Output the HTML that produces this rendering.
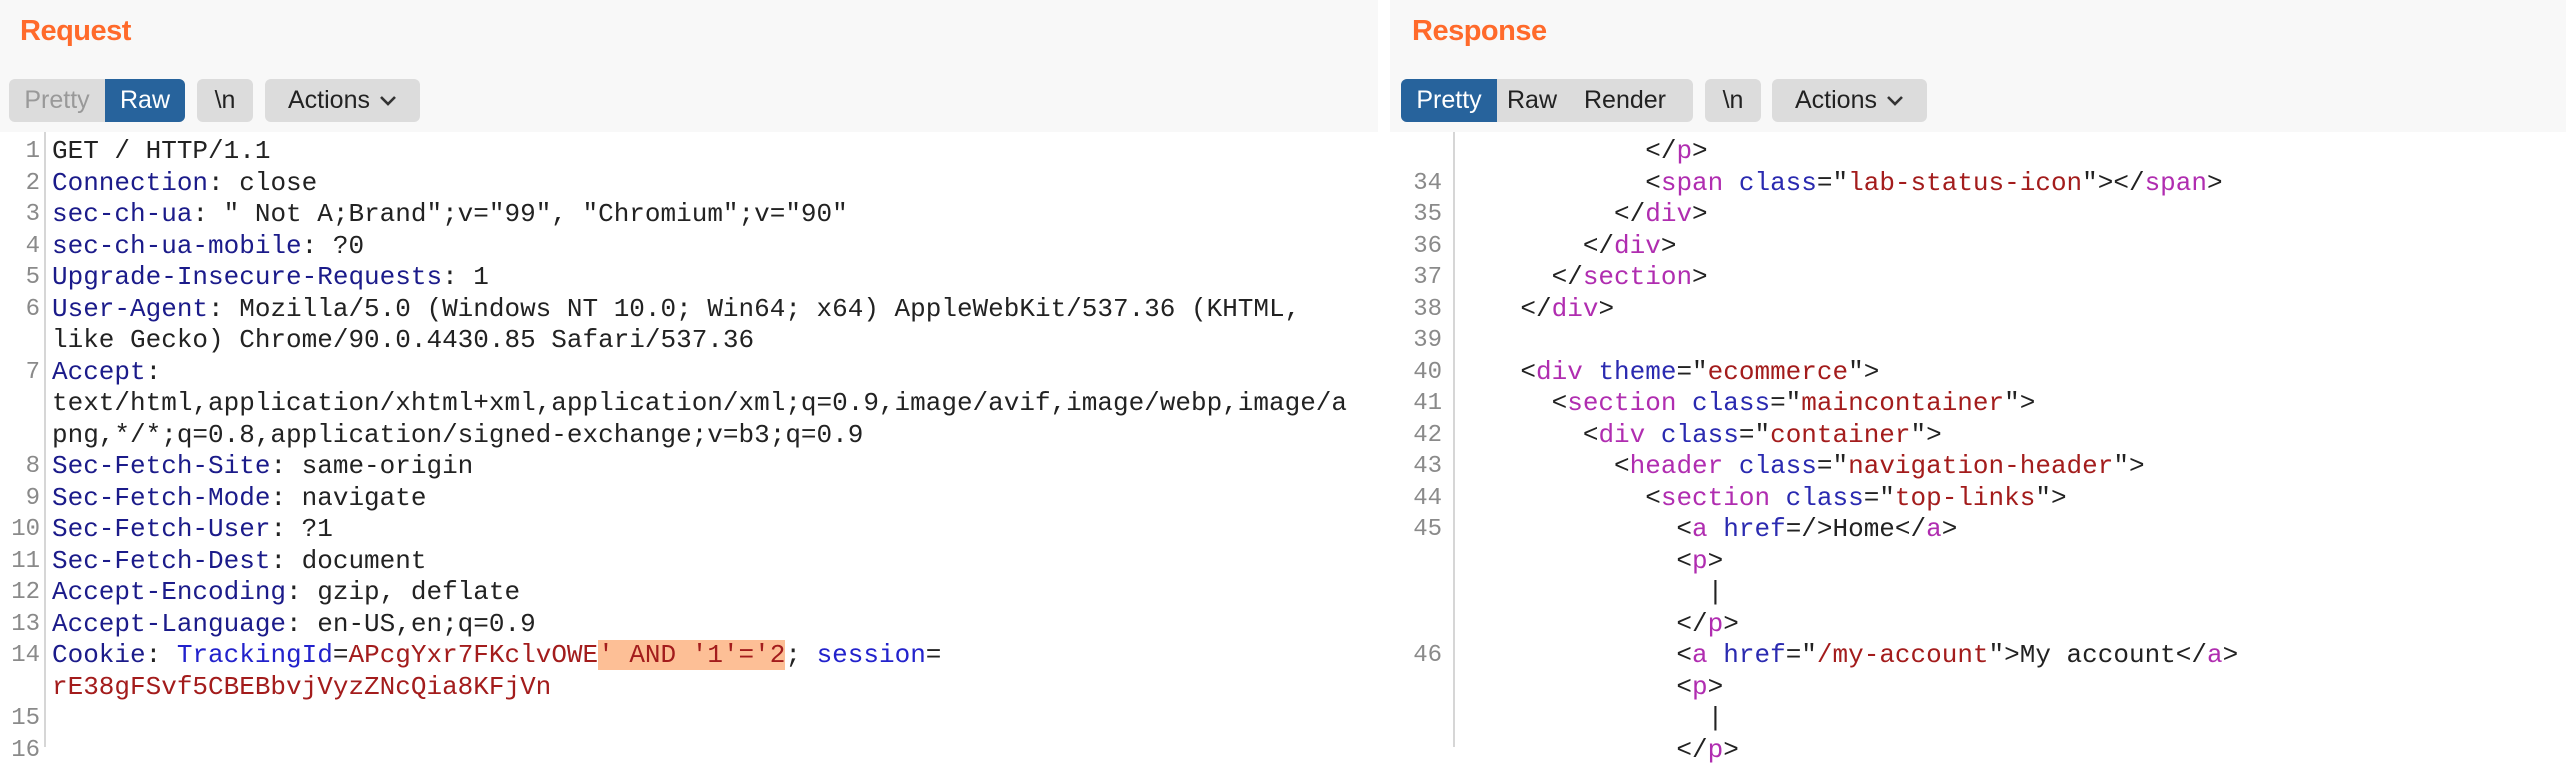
<!DOCTYPE html>
<html><head><meta charset="utf-8"><style>
*{margin:0;padding:0;box-sizing:border-box}
body{width:2566px;height:747px;background:#fff;position:relative;overflow:hidden;font-family:"Liberation Sans",sans-serif}
.hdr{position:absolute;top:0;height:132px;background:#f8f8f8}
.title{position:absolute;top:15px;font-weight:bold;font-size:29px;color:#ff6a2b;letter-spacing:-0.5px}
.btn{position:absolute;top:79px;height:43px;background:#dcdcdc;border-radius:6px;font-size:25px;color:#222;line-height:43px;display:flex;overflow:hidden}
.btn span{display:flex;justify-content:center;align-items:center}
.btn .on{background:#27639c;color:#fff}
.btn svg{margin-left:9px}
.gut{position:absolute;top:132px;width:2px;height:615px;background:#d6d6d6}
.code{position:absolute;top:136px;font-family:"Liberation Mono",monospace;font-size:26px;line-height:31.5px;white-space:pre;color:#222}
.num{position:absolute;top:136px;font-family:"Liberation Mono",monospace;font-size:24px;line-height:31.5px;white-space:pre;color:#8a8a8a;text-align:right}
.k{color:#1b1b8a}.b{color:#2222cc}.r{color:#a31c1c}.hl{background:#fdbf96;color:#a31c1c}
.t{color:#b02db0}.a{color:#2a2ab0}
</style></head><body>
<div class="hdr" style="left:0;width:1378px"></div>
<div class="hdr" style="left:1390px;width:1176px"></div>
<div class="title" style="left:20px">Request</div>
<div class="title" style="left:1412px">Response</div>

<div class="btn" style="left:9px;width:176px"><span style="width:96px;color:#999">Pretty</span><span class="on" style="width:80px">Raw</span></div>
<div class="btn" style="left:197px;width:56px"><span style="width:56px">\n</span></div>
<div class="btn" style="left:265px;width:155px"><span style="width:155px">Actions<svg width="18" height="12" viewBox="0 0 18 12"><path d="M2 2l7 7 7-7" fill="none" stroke="#333" stroke-width="2.6"/></svg></span></div>

<div class="btn" style="left:1401px;width:292px"><span class="on" style="width:96px">Pretty</span><span style="width:70px">Raw</span><span style="width:116px">Render</span></div>
<div class="btn" style="left:1705px;width:56px"><span style="width:56px">\n</span></div>
<div class="btn" style="left:1772px;width:155px"><span style="width:155px">Actions<svg width="18" height="12" viewBox="0 0 18 12"><path d="M2 2l7 7 7-7" fill="none" stroke="#333" stroke-width="2.6"/></svg></span></div>

<div class="gut" style="left:44px"></div>
<div class="num" style="left:0;width:40px">1
2
3
4
5
6

7


8
9
10
11
12
13
14

15
16</div>
<div class="code" style="left:52px">GET / HTTP/1.1
<span class="k">Connection</span>: close
<span class="k">sec-ch-ua</span>: " Not A;Brand";v="99", "Chromium";v="90"
<span class="k">sec-ch-ua-mobile</span>: ?0
<span class="k">Upgrade-Insecure-Requests</span>: 1
<span class="k">User-Agent</span>: Mozilla/5.0 (Windows NT 10.0; Win64; x64) AppleWebKit/537.36 (KHTML,
like Gecko) Chrome/90.0.4430.85 Safari/537.36
<span class="k">Accept</span>:
text/html,application/xhtml+xml,application/xml;q=0.9,image/avif,image/webp,image/a
png,*/*;q=0.8,application/signed-exchange;v=b3;q=0.9
<span class="k">Sec-Fetch-Site</span>: same-origin
<span class="k">Sec-Fetch-Mode</span>: navigate
<span class="k">Sec-Fetch-User</span>: ?1
<span class="k">Sec-Fetch-Dest</span>: document
<span class="k">Accept-Encoding</span>: gzip, deflate
<span class="k">Accept-Language</span>: en-US,en;q=0.9
<span class="k">Cookie</span>: <span class="b">TrackingId</span>=<span class="r">APcgYxr7FKclvOWE</span><span class="hl">' AND '1'='2</span>; <span class="b">session</span>=
<span class="r">rE38gFSvf5CBEBbvjVyzZNcQia8KFjVn</span>
</div>

<div class="gut" style="left:1453px"></div>
<div class="num" style="left:1390px;width:52px">
34
35
36
37
38
39
40
41
42
43
44
45



46</div>
<div class="code" style="left:1458px">            &lt;/<span class="t">p</span>&gt;
            &lt;<span class="t">span</span> <span class="a">class</span>="<span class="r">lab-status-icon</span>"&gt;&lt;/<span class="t">span</span>&gt;
          &lt;/<span class="t">div</span>&gt;
        &lt;/<span class="t">div</span>&gt;
      &lt;/<span class="t">section</span>&gt;
    &lt;/<span class="t">div</span>&gt;

    &lt;<span class="t">div</span> <span class="a">theme</span>="<span class="r">ecommerce</span>"&gt;
      &lt;<span class="t">section</span> <span class="a">class</span>="<span class="r">maincontainer</span>"&gt;
        &lt;<span class="t">div</span> <span class="a">class</span>="<span class="r">container</span>"&gt;
          &lt;<span class="t">header</span> <span class="a">class</span>="<span class="r">navigation-header</span>"&gt;
            &lt;<span class="t">section</span> <span class="a">class</span>="<span class="r">top-links</span>"&gt;
              &lt;<span class="t">a</span> <span class="a">href</span>=/&gt;Home&lt;/<span class="t">a</span>&gt;
              &lt;<span class="t">p</span>&gt;
                |
              &lt;/<span class="t">p</span>&gt;
              &lt;<span class="t">a</span> <span class="a">href</span>="<span class="r">/my-account</span>"&gt;My account&lt;/<span class="t">a</span>&gt;
              &lt;<span class="t">p</span>&gt;
                |
              &lt;/<span class="t">p</span>&gt;</div>
</body></html>
